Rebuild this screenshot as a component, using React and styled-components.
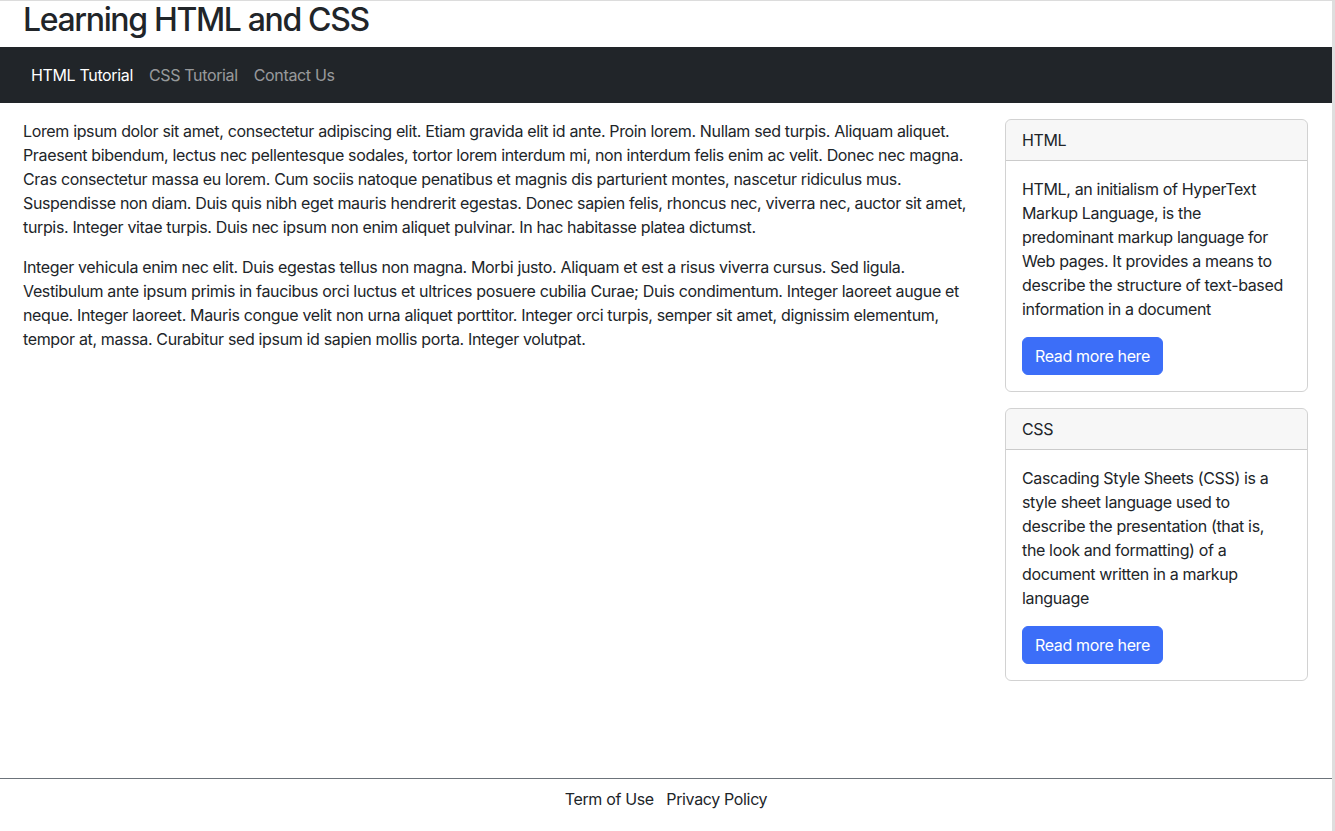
import React from "react";
import styled, { createGlobalStyle } from "styled-components";

const GlobalStyle = createGlobalStyle`
  *, *::before, *::after { box-sizing: border-box; }
  html, body { margin: 0; padding: 0; background: #fff; }
  body {
    font-family: Inter, "Noto Sans", sans-serif;
    font-size: 16px;
    line-height: 24px;
    letter-spacing: -0.35px;
    color: #212529;
  }
`;

const Page = styled.div`
  width: 1332px;
  height: 830px;
  box-sizing: content-box;
  display: flex;
  flex-direction: column;
  border-top: 1px solid #dcdcdc;
  border-right: 3px solid #dedede;
`;

const Header = styled.header`
  height: 46px;
  padding: 0 23px;
`;

const Title = styled.h1`
  margin: 0;
  font-size: 32px;
  font-weight: 500;
  line-height: 38px;
  letter-spacing: -1.35px;
`;

const NavBar = styled.nav`
  height: 56px;
  background: #212529;
  display: flex;
  align-items: center;
  padding: 0 23px;
`;

const NavLink = styled.a`
  padding: 8px;
  font-size: 16px;
  line-height: 24px;
  text-decoration: none;
  color: ${(p) => (p.$active ? "#ffffff" : "rgba(255,255,255,0.55)")};
`;

const Main = styled.main`
  display: grid;
  grid-template-columns: minmax(0, 1fr) 303px;
  column-gap: 24px;
  padding: 16px 24px 0 23px;
  align-items: start;
`;

const Content = styled.div`
  padding-right: 0;
`;

const Paragraph = styled.p`
  margin: 0 0 16px;
`;

const Sidebar = styled.aside`
  display: flex;
  flex-direction: column;
  gap: 16px;
`;

const Card = styled.section`
  border: 1px solid rgba(0, 0, 0, 0.175);
  border-radius: 6px;
  overflow: hidden;
`;

const CardHeader = styled.div`
  padding: 8px 16px;
  background: rgba(0, 0, 0, 0.03);
  border-bottom: 1px solid rgba(0, 0, 0, 0.175);
`;

const CardBody = styled.div`
  padding: 16px;
`;

const CardText = styled.p`
  margin: 0 0 16px;
`;

const Button = styled.a`
  display: inline-block;
  padding: 6px 12px;
  font-size: 16px;
  line-height: 24px;
  color: #fff;
  background: #3c6ef8;
  border: 1px solid #3c6ef8;
  border-radius: 6px;
  text-decoration: none;
`;

const Footer = styled.footer`
  margin-top: auto;
  border-top: 1px solid #6c737a;
  padding: 8px 0 20px;
  display: flex;
  justify-content: center;
  gap: 12.5px;
`;

const FooterLink = styled.a`
  color: #212529;
  text-decoration: none;
`;

const cards = [
  {
    title: "HTML",
    text: "HTML, an initialism of HyperText Markup Language, is the predominant markup language for Web pages. It provides a means to describe the structure of text-based information in a document",
  },
  {
    title: "CSS",
    text: "Cascading Style Sheets (CSS) is a style sheet language used to describe the presentation (that is, the look and formatting) of a document written in a markup language",
  },
];

export default function App() {
  return (
    <>
      <GlobalStyle />
      <Page>
        <Header>
          <Title>Learning HTML and CSS</Title>
        </Header>
        <NavBar>
          <NavLink href="#" $active>HTML Tutorial</NavLink>
          <NavLink href="#">CSS Tutorial</NavLink>
          <NavLink href="#">Contact Us</NavLink>
        </NavBar>
        <Main>
          <Content>
            <Paragraph>
              Lorem ipsum dolor sit amet, consectetur adipiscing elit. Etiam gravida elit id ante. Proin lorem. Nullam sed turpis. Aliquam aliquet. Praesent bibendum, lectus nec pellentesque sodales, tortor lorem interdum mi, non interdum felis enim ac velit. Donec nec magna. Cras consectetur massa eu lorem. Cum sociis natoque penatibus et magnis dis parturient montes, nascetur ridiculus mus. Suspendisse non diam. Duis quis nibh eget mauris hendrerit egestas. Donec sapien felis, rhoncus nec, viverra nec, auctor sit amet, turpis. Integer vitae turpis. Duis nec ipsum non enim aliquet pulvinar. In hac habitasse platea dictumst.
            </Paragraph>
            <Paragraph>
              Integer vehicula enim nec elit. Duis egestas tellus non magna. Morbi justo. Aliquam et est a risus viverra cursus. Sed ligula. Vestibulum ante ipsum primis in faucibus orci luctus et ultrices posuere cubilia Curae; Duis condimentum. Integer laoreet augue et neque. Integer laoreet. Mauris congue velit non urna aliquet porttitor. Integer orci turpis, semper sit amet, dignissim elementum, tempor at, massa. Curabitur sed ipsum id sapien mollis porta. Integer volutpat.
            </Paragraph>
          </Content>
          <Sidebar>
            {cards.map((c) => (
              <Card key={c.title}>
                <CardHeader>{c.title}</CardHeader>
                <CardBody>
                  <CardText>{c.text}</CardText>
                  <Button href="#">Read more here</Button>
                </CardBody>
              </Card>
            ))}
          </Sidebar>
        </Main>
        <Footer>
          <FooterLink href="#">Term of Use</FooterLink>
          <FooterLink href="#">Privacy Policy</FooterLink>
        </Footer>
      </Page>
    </>
  );
}
